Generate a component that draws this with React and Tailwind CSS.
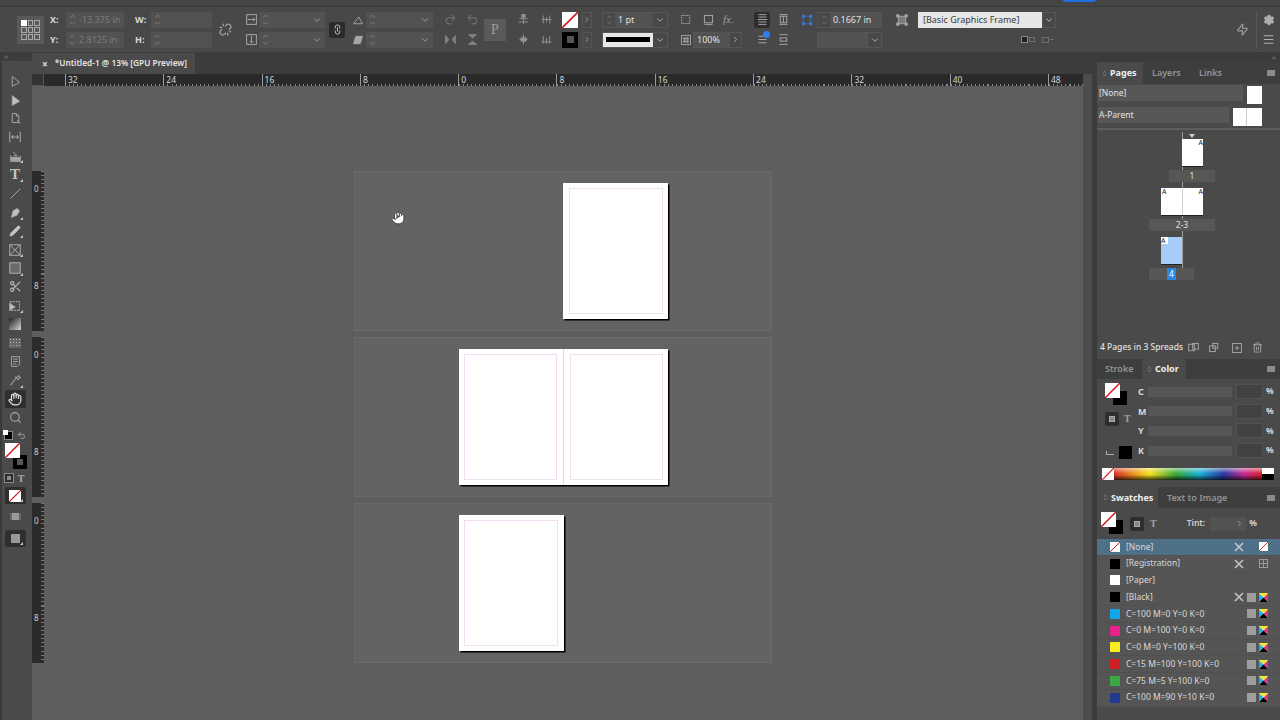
import { Hand, Scissors, Search, Pencil, Settings, Trash2, Menu, Zap, Undo2, Redo2, Unlink, Link2, ChevronRight, ChevronDown, ChevronUp, ChevronsUpDown } from "lucide-react";

const gray = "#a6a6a6";

function Svg({ size = 14, children, className = "" }) {
  return (
    <svg width={size} height={size} viewBox="0 0 16 16" fill="none" stroke={gray} strokeWidth="1.2" className={className}>
      {children}
    </svg>
  );
}

function Stepper() {
  return (
    <div className="w-[12px] h-full flex flex-col items-center justify-center text-[#8f8f8f] shrink-0">
      <ChevronUp size={9} className="-mb-[1px]" />
      <ChevronDown size={9} />
    </div>
  );
}

function NoneSwatch({ className = "" }) {
  return (
    <svg viewBox="0 0 16 16" preserveAspectRatio="none" className={className}>
      <rect width="16" height="16" fill="#fff" />
      <line x1="0" y1="16" x2="16" y2="0" stroke="#d0161c" strokeWidth="1.6" />
    </svg>
  );
}

function SpinField({ label, value, dim, chevron, icon }) {
  return (
    <div className="flex items-center h-[16px]">
      {label && <span className="w-[16px] text-[9px] font-bold text-[#d8d8d8]">{label}</span>}
      {icon && <div className="w-[16px] flex justify-center">{icon}</div>}
      <div className="flex-1 h-full flex items-center bg-[#525252] rounded-[1px]">
        <Stepper />
        <span className={`flex-1 pl-[1px] text-[9px] ${dim ? "text-[#7a7a7a]" : "text-[#e0e0e0]"}`}>{value}</span>
        {chevron && <ChevronDown size={10} className="text-[#a8a8a8] mr-[3px]" />}
      </div>
    </div>
  );
}

function TwoRows({ className, children }) {
  return <div className={`flex flex-col justify-center gap-[4px] shrink-0 ${className}`}>{children}</div>;
}

function IconCell({ children, dark }) {
  return (
    <div className={`w-[16px] h-[16px] flex items-center justify-center ${dark ? "bg-[#2e2e2e] rounded-[2px]" : ""}`}>
      {children}
    </div>
  );
}

function CmykIcon() {
  return (
    <svg width="9" height="9" viewBox="0 0 9 9">
      <rect width="9" height="9" fill="#f5f5f5" />
      <path d="M0 0L4.5 4.5L0 9Z" fill="#19b5ee" />
      <path d="M9 0L4.5 4.5L9 9Z" fill="#ec2f8c" />
      <path d="M0 0H9L4.5 4.5Z" fill="#f6e829" />
      <path d="M0 9H9L4.5 4.5Z" fill="#000" />
    </svg>
  );
}

function CrossIcon() {
  return (
    <svg width="10" height="10" viewBox="0 0 10 10" stroke="#c4c4c4" strokeWidth="1.6">
      <path d="M1 1L9 9M9 1L1 9" />
    </svg>
  );
}

function ControlBar() {
  return (
    <div className="h-[46px] bg-[#484848] border-t border-[#3a3a3a] flex items-center pl-[17px] shrink-0">
      <div className="w-[27px] h-[28px] bg-[#595959] grid grid-cols-3 gap-[1px] p-[4px] shrink-0">
        {[0, 1, 2, 3, 4, 5, 6, 7, 8].map((i) => (
          <div key={i} className={`border border-[#a8a8a8] ${i === 0 ? "bg-white border-white" : ""}`} />
        ))}
      </div>
      <TwoRows className="ml-[6px] w-[74px]">
        <SpinField label="X:" value="-13.375 in" dim />
        <SpinField label="Y:" value="2.8125 in" dim />
      </TwoRows>
      <TwoRows className="ml-[11px] w-[77px]">
        <SpinField label="W:" value="" />
        <SpinField label="H:" value="" />
      </TwoRows>
      <div className="ml-[6px] w-[14px] flex justify-center shrink-0">
        <Unlink size={13} color="#b0b0b0" />
      </div>
      <TwoRows className="ml-[11px] w-[82px]">
        <SpinField chevron value="" icon={<Svg size={13}><rect x="2" y="2" width="12" height="12" /><path d="M3 8H12M10 6L12 8L10 10" /></Svg>} />
        <SpinField chevron value="" icon={<Svg size={13}><rect x="2" y="2" width="12" height="12" /><path d="M8 3V12M6 10L8 12L10 10" /></Svg>} />
      </TwoRows>
      <div className="ml-[4px] w-[16px] h-[16px] bg-[#2b2b2b] rounded-[2px] flex items-center justify-center shrink-0">
        <Link2 size={11} color="#c8c8c8" className="rotate-90" />
      </div>
      <TwoRows className="ml-[5px] w-[83px]">
        <SpinField chevron value="" icon={<Svg size={12}><path d="M2 13H14L9 4Z" /></Svg>} />
        <SpinField chevron value="" icon={<Svg size={12}><path d="M2 13H11L14 3H5Z" fill={gray} /></Svg>} />
      </TwoRows>
      <div className="ml-[9px] w-[38px] grid grid-cols-2 gap-x-[6px] gap-y-[4px] shrink-0 opacity-60">
        <IconCell><Redo2 size={13} color="#8a8a8a" /></IconCell>
        <IconCell><Undo2 size={13} color="#8a8a8a" /></IconCell>
        <IconCell><Svg size={13}><path d="M2 3V13L6 8ZM14 3V13L10 8Z" fill={gray} /></Svg></IconCell>
        <IconCell><Svg size={13}><path d="M3 2H13L8 6ZM3 14H13L8 10Z" fill={gray} /></Svg></IconCell>
      </div>
      <div className="ml-[4px] w-[22px] h-[22px] bg-[#5a5a5a] flex items-center justify-center text-[14px] font-['Liberation_Serif',serif] text-[#9a9a9a] shrink-0">
        P
      </div>
      <div className="ml-[9px] w-[40px] grid grid-cols-2 gap-x-[6px] gap-y-[4px] shrink-0 opacity-80">
        <IconCell><Svg size={13}><path d="M8 2V14M3 7H13M2 11H14" /><rect x="6" y="2" width="4" height="3" fill={gray} /></Svg></IconCell>
        <IconCell><Svg size={13}><path d="M2 8H14M4 3V13M8 5V11M12 3V13" /></Svg></IconCell>
        <IconCell><Svg size={13}><path d="M8 2V14M3 8H13" /><rect x="5" y="6" width="6" height="4" fill={gray} /></Svg></IconCell>
        <IconCell><Svg size={13}><path d="M2 11H14M4 4V13M8 6V13M12 4V13" /></Svg></IconCell>
      </div>
      <div className="ml-[7px] w-[30px] flex flex-col gap-[4px] shrink-0">
        <div className="flex items-center gap-[4px] h-[16px]">
          <NoneSwatch className="w-[16px] h-[16px]" />
          <div className="w-[10px] h-[16px] border border-[#555] flex items-center justify-center"><ChevronRight size={9} color="#c0c0c0" /></div>
        </div>
        <div className="flex items-center gap-[4px] h-[16px]">
          <div className="w-[16px] h-[16px] bg-black flex items-center justify-center"><div className="w-[7px] h-[7px] bg-[#555]" /></div>
          <div className="w-[10px] h-[16px] border border-[#555] flex items-center justify-center"><ChevronRight size={9} color="#c0c0c0" /></div>
        </div>
      </div>
      <div className="ml-[10px] w-[66px] flex flex-col gap-[4px] shrink-0">
        <div className="h-[16px] flex items-center border border-[#565656]">
          <Stepper />
          <span className="flex-1 h-full bg-[#525252] pl-[3px] text-[9px] leading-[14px] text-[#e0e0e0]">1 pt</span>
          <ChevronDown size={10} color="#c0c0c0" className="mx-[2px]" />
        </div>
        <div className="h-[16px] flex items-center border border-[#565656]">
          <div className="flex-1 h-full bg-[#e8e8e8] flex items-center px-[3px]"><div className="w-full h-[5px] bg-black" /></div>
          <ChevronDown size={10} color="#c0c0c0" className="mx-[2px]" />
        </div>
      </div>
      <div className="ml-[10px] w-[64px] flex flex-col gap-[4px] shrink-0">
        <div className="h-[16px] flex items-center gap-[6px]">
          <IconCell><Svg size={13}><rect x="2" y="3" width="10" height="10" strokeDasharray="2 1" /></Svg></IconCell>
          <IconCell><Svg size={13}><rect x="3" y="3" width="10" height="9" /><path d="M3 14H13" /></Svg></IconCell>
          <span className="ml-[1px] italic font-['Liberation_Serif',serif] text-[11px] text-[#a0a0a0]">fx.</span>
        </div>
        <div className="h-[16px] flex items-center">
          <IconCell><Svg size={12}><rect x="2" y="2" width="12" height="12" /><path d="M5 5H7V7H5ZM9 9H11V11H9ZM9 5H11V7H9ZM5 9H7V11H5Z" fill={gray} /></Svg></IconCell>
          <div className="ml-[-1px] flex-1 h-full flex items-center border border-[#565656]">
            <span className="flex-1 h-full bg-[#525252] pl-[3px] text-[9px] leading-[14px] text-[#e0e0e0]">100%</span>
            <ChevronRight size={9} color="#c0c0c0" className="mx-[1px]" />
          </div>
        </div>
      </div>
      <div className="ml-[12px] w-[37px] grid grid-cols-2 gap-x-[5px] gap-y-[4px] shrink-0">
        <IconCell dark><Svg size={13}><path d="M3 2H13M3 5H13M2 8H14M3 11H13M3 14H13" /></Svg></IconCell>
        <IconCell><Svg size={13}><path d="M3 2H13M3 14H13" /><rect x="4" y="4" width="8" height="8" /><path d="M8 4V12" /></Svg></IconCell>
        <div className="relative w-[16px] h-[16px] flex items-center justify-center">
          <Svg size={13}><path d="M3 4H13M3 8H13M3 12H13" /></Svg>
          <div className="absolute -top-[1px] right-0 w-[7px] h-[7px] rounded-full bg-[#2f7bea]" />
        </div>
        <IconCell><Svg size={13}><path d="M3 2H13M3 14H13" /><rect x="4" y="6" width="8" height="4" /></Svg></IconCell>
      </div>
      <div className="ml-[8px] w-[83px] flex flex-col gap-[4px] shrink-0">
        <div className="h-[16px] flex items-center">
          <div className="w-[16px] flex justify-center shrink-0">
            <svg width="12" height="12" viewBox="0 0 16 14" fill="#3a78cf" stroke="#3a78cf">
              <path d="M3 2H13M3 12H13M3 2V12M13 2V12" fill="none" strokeWidth="1" />
              <rect x="1.5" y="0.5" width="3" height="3" />
              <rect x="11.5" y="0.5" width="3" height="3" />
              <rect x="1.5" y="10.5" width="3" height="3" />
              <rect x="11.5" y="10.5" width="3" height="3" />
            </svg>
          </div>
          <div className="ml-[2px] w-[65px] h-full flex items-center border border-[#565656]">
            <Stepper />
            <span className="flex-1 h-full bg-[#525252] pl-[3px] text-[9px] leading-[14px] text-[#e0e0e0]">0.1667 in</span>
          </div>
        </div>
        <div className="h-[16px] flex items-center pl-[18px]">
          <div className="w-[50px] h-full bg-[#525252] border border-[#565656]" />
          <div className="w-[15px] h-full border border-[#565656] flex items-center justify-center"><ChevronDown size={10} color="#c0c0c0" /></div>
        </div>
      </div>
      <div className="ml-[13px] w-[161px] flex flex-col gap-[4px] shrink-0">
        <div className="h-[16px] flex items-center">
          <div className="w-[14px] flex justify-center shrink-0">
            <Svg size={12}><rect x="3" y="3" width="10" height="10" fill="#7c7c7c" /><rect x="1" y="1" width="3" height="3" fill={gray} /><rect x="12" y="1" width="3" height="3" fill={gray} /><rect x="1" y="12" width="3" height="3" fill={gray} /><rect x="12" y="12" width="3" height="3" fill={gray} /></Svg>
          </div>
          <div className="ml-[9px] w-[124px] h-full bg-[#e6e6e6] pl-[5px] text-[9px] leading-[16px] text-[#3c3c3c]">[Basic Graphics Frame]</div>
          <div className="w-[14px] h-full border border-[#565656] flex items-center justify-center"><ChevronDown size={10} color="#d0d0d0" /></div>
        </div>
        <div className="h-[16px] flex items-center justify-end gap-[7px] pr-[2px]">
          <div className="flex items-center gap-[1px]">
            <div className="w-[7px] h-[7px] bg-[#222] border border-[#8a8a8a]" />
            <div className="w-[6px] h-[5px] border border-[#6e6e6e]" />
          </div>
          <div className="flex items-center gap-[1px]">
            <div className="w-[7px] h-[6px] border border-[#6e6e6e]" />
            <div className="w-[4px] h-[1px] bg-[#6e6e6e]" />
          </div>
        </div>
      </div>
      <div className="flex-1" />
      <Zap size={13} color="#9c9c9c" className="-rotate-6 mr-[3px]" />
      <div className="ml-[4px] w-px h-[38px] bg-[#585858]" />
      <div className="w-[23px] flex flex-col items-center gap-[7px]">
        <Settings size={12} color="#b0b0b0" fill="#b0b0b0" />
        <Menu size={13} color="#b0b0b0" />
      </div>
    </div>
  );
}

function ToolCorner() {
  return <div className="absolute right-[3px] bottom-[2px] w-0 h-0 border-l-[3px] border-l-transparent border-b-[3px] border-b-[#c8c8c8]" />;
}

function Tool({ children, corner, active, h = "h-[18.7px]" }) {
  return (
    <div className={`relative w-[21px] ${h} flex items-center justify-center shrink-0 ${active ? "bg-[#2f2f2f] rounded-[2px]" : ""}`}>
      {children}
      {corner && <ToolCorner />}
    </div>
  );
}

function Toolbar() {
  return (
    <div className="w-[32px] bg-[#4a4a4a] border-l-2 border-[#3b3b3b] flex flex-col shrink-0">
      <div className="h-[9px] bg-[#3c3c3c] text-[7px] leading-[9px] pl-[2px] text-[#8a8a8a] shrink-0">››</div>
      <div className="w-[26px] flex flex-col items-center pt-[11px]">
        <Tool><Svg size={13}><path d="M4 2V14L13 9Z" /></Svg></Tool>
        <Tool><Svg size={13}><path d="M4 2V14L13 9Z" fill="#c0c0c0" /></Svg></Tool>
        <Tool><Svg size={13}><path d="M4 2H9L12 5V13H4ZM9 2V5H12" /><path d="M10 10L14 14" /></Svg></Tool>
        <Tool><Svg size={14}><path d="M2 2V14M14 2V14M4 8H12M4 8L6 6M4 8L6 10M12 8L10 6M12 8L10 10" /></Svg></Tool>
        <Tool corner><Svg size={13}><path d="M2 7V14H14V7M6 7H10" /><path d="M3 9H13V13H3Z" fill={gray} /><path d="M5 2L9 6" /></Svg></Tool>
        <Tool corner><span className="font-['Liberation_Serif',serif] font-bold text-[15px] leading-none text-[#c4c4c4]">T</span></Tool>
        <Tool><Svg size={13}><path d="M2 14L14 2" /></Svg></Tool>
        <Tool corner><Svg size={13}><path d="M3 14L5 6L10 3L13 6L10 11Z" fill="#c0c0c0" /></Svg></Tool>
        <Tool corner><Pencil size={12} color="#c0c0c0" fill="#c0c0c0" /></Tool>
        <Tool corner><Svg size={14}><rect x="2" y="2" width="12" height="12" /><path d="M2 2L14 14M14 2L2 14" /></Svg></Tool>
        <Tool corner><Svg size={14}><rect x="2" y="2" width="12" height="12" fill="#6a6a6a" /></Svg></Tool>
        <Tool><Scissors size={13} color="#c0c0c0" /></Tool>
        <Tool corner><Svg size={14}><rect x="3" y="3" width="10" height="10" strokeDasharray="2 1" /><path d="M2 5V13L8 9Z" fill="#c0c0c0" /></Svg></Tool>
        <Tool><div className="w-[12px] h-[12px] bg-gradient-to-br from-[#222] to-[#ddd]" /></Tool>
        <Tool><div className="w-[12px] h-[10px] bg-[radial-gradient(#bbb_1px,#666_1px)] bg-[length:3px_3px]" /></Tool>
        <Tool><Svg size={13}><path d="M3 2H13V11L10 14H3ZM5 5H11M5 8H11M5 11H9" /></Svg></Tool>
        <Tool corner><Svg size={14}><path d="M3 14L9 6M8 4L12 8M10 5L12 3L14 5L12 7" /></Svg></Tool>
        <Tool active><Hand size={14} color="#e0e0e0" strokeWidth={2} /></Tool>
        <Tool><Search size={13} color="#a8a8a8" /></Tool>
        <div className="w-[26px] h-[15px] flex items-center justify-between px-[2px] shrink-0 mt-[1px]">
          <div className="relative w-[9px] h-[9px] bg-black border border-[#888]"><div className="absolute -top-[2px] -left-[2px] w-[5px] h-[5px] bg-white" /></div>
          <Undo2 size={9} color="#b0b0b0" />
        </div>
        <div className="relative w-[26px] h-[26px] shrink-0">
          <div className="absolute right-[1px] bottom-[0px] w-[14px] h-[14px] bg-black flex items-center justify-center"><div className="w-[6px] h-[6px] bg-[#555]" /></div>
          <NoneSwatch className="absolute left-[3px] top-0 w-[15px] h-[15px]" />
        </div>
        <div className="flex items-center justify-center gap-[2px] h-[16px] shrink-0 mt-[1px]">
          <div className="w-[10px] h-[10px] bg-[#2e2e2e] flex items-center justify-center border border-[#888]"><div className="w-[4px] h-[4px] bg-[#888]" /></div>
          <span className="w-[10px] text-center font-['Liberation_Serif',serif] font-bold text-[10px] text-[#a8a8a8]">T</span>
        </div>
        <Tool active h="h-[17px] mt-[1px]"><NoneSwatch className="w-[12px] h-[12px]" /><ToolCorner /></Tool>
        <div className="h-[20px] flex items-center shrink-0 mt-[2px]">
          <div className="w-[11px] h-[7px] bg-[#9a9a9a] border-x-2 border-[#666]" />
        </div>
        <Tool active h="h-[17px] mt-[4px]"><div className="w-[9px] h-[9px] bg-[#999]" /><ToolCorner /></Tool>
      </div>
    </div>
  );
}

const rulerLabels = ["32", "24", "16", "8", "0", "8", "16", "24", "32", "40", "48"];

function HRuler() {
  return (
    <div className="h-[12px] flex bg-[#4c4c4c] shrink-0">
      <div className="w-[12px] h-full bg-[#333] border-r border-b border-[#555] shrink-0" />
      <div className="w-[1039px] h-full flex overflow-hidden pl-[21px] bg-[#2a2a2a]">
        <div className="flex h-full bg-[repeating-linear-gradient(to_right,#8a8a8a_0,#8a8a8a_1px,transparent_1px,transparent_4.1px)] bg-[length:100%_2px] bg-bottom bg-no-repeat">
          {rulerLabels.map((t, i) => (
            <div key={i} className="w-[98.3px] shrink-0 border-l border-[#9a9a9a] pl-[2px] text-[8.5px] leading-[11px] text-[#d4d4d4]">
              {t}
            </div>
          ))}
        </div>
      </div>
    </div>
  );
}

function VSegment({ h, label, label2 }) {
  return (
    <div className={`w-[12px] ${h} bg-[#2b2b2b] bg-[repeating-linear-gradient(to_bottom,#777_0,#777_1px,transparent_1px,transparent_4.1px)] bg-[length:3px_100%] bg-right bg-no-repeat text-[8px] text-[#d0d0d0] pl-[2px] pt-[12px] leading-[10px]`}>
      <div className="h-[98px] border-t border-transparent">{label}</div>
      <div>{label2}</div>
    </div>
  );
}

function VRuler() {
  return (
    <div className="w-[12px] bg-[#5e5e5e] flex flex-col items-stretch shrink-0 pt-[85px] gap-[6px]">
      <VSegment h="h-[160px]" label="0" label2="8" />
      <VSegment h="h-[160px]" label="0" label2="8" />
      <VSegment h="h-[160px]" label="0" label2="8" />
    </div>
  );
}

function DocPage({ inner = "left", w = "w-[105px]" }) {
  return (
    <div className={`${w} h-[136px] bg-white py-[5px] ${inner === "left" ? "pl-[6px] pr-[5px]" : "pl-[5px] pr-[6px]"}`}>
      <div className="w-full h-full border border-[#f2dcf2] border-b-[#ebe3eb]" />
    </div>
  );
}

function Spread({ children, offset }) {
  return (
    <div className={`w-[418px] h-[160px] bg-[#636363] border border-[#6a6a6a] pt-[11px] ${offset}`}>
      <div className="w-fit flex shadow-[1.5px_1.5px_0_#000]">{children}</div>
    </div>
  );
}

function Canvas() {
  return (
    <div className="relative flex-1 bg-[#5e5e5e] pt-[85px] pl-[310px] flex flex-col gap-[6px] overflow-hidden">
      <Spread offset="pl-[208px]"><DocPage inner="left" /></Spread>
      <Spread offset="pl-[104px]">
        <DocPage inner="right" w="w-[104px]" />
        <div className="w-px bg-[#dcdcdc]" />
        <DocPage inner="left" w="w-[104px]" />
      </Spread>
      <Spread offset="pl-[104px]"><DocPage inner="right" /></Spread>
      <Hand size={14} color="#222" fill="#fff" strokeWidth={1.2} className="absolute left-[347px] top-[125px]" />
    </div>
  );
}

function PanelTabs({ tabs, active, h = "h-[20px]" }) {
  return (
    <div className={`${h} bg-[#3e3e3e] flex items-stretch shrink-0`}>
      {tabs.map((t) => (
        <div
          key={t.name}
          className={`flex items-center text-[9px] ${t.w} ${t.name === active ? "bg-[#4a4a4a] font-bold text-[#f0f0f0]" : "font-semibold text-[#949494]"}`}
        >
          {t.name === active && <ChevronsUpDown size={7} className="text-[#a0a0a0] mr-[2px]" />}
          {t.name}
        </div>
      ))}
      <div className="flex-1" />
      <div className="w-[8px] h-[6px] bg-[#8a8a8a] self-center mr-[5px]" />
    </div>
  );
}

function Thumb({ className = "", children }) {
  return <div className={`relative shadow-[0_1px_0_#222] ${className}`}>{children}</div>;
}

function Letter({ className = "" }) {
  return <span className={`absolute top-0 text-[7px] leading-[8px] text-[#222] ${className}`}>A</span>;
}

function PagesPanel() {
  return (
    <div className="flex flex-col h-[297px] bg-[#4a4a4a] shrink-0">
      <PanelTabs
        h="h-[22px]"
        active="Pages"
        tabs={[
          { name: "Pages", w: "w-[46px] pl-[4px]" },
          { name: "Layers", w: "w-[47px] pl-[9px]" },
          { name: "Links", w: "w-[45px] pl-[9px]" },
        ]}
      />
      <div className="h-[46px] border-b-2 border-[#5e5e5e] pt-[1px] shrink-0 box-border">
        <div className="flex items-start gap-[4px] h-[22px] pr-[18px] pl-[1px]">
          <div className="flex-1 h-[16px] bg-[#575757] text-[8.5px] leading-[15px] pl-[1px] text-[#e4e4e4]">[None]</div>
          <div className="w-[15px] h-[18px] mt-[1px] bg-white" />
        </div>
        <div className="flex items-start gap-[4px] h-[20px] pr-[18px] pl-[1px]">
          <div className="flex-1 h-[16px] bg-[#575757] text-[8.5px] leading-[15px] pl-[1px] text-[#e4e4e4]">A-Parent</div>
          <div className="w-[29px] h-[18px] mt-[1px] bg-white flex"><div className="w-[14px] border-r border-[#ccc]" /></div>
        </div>
      </div>
      <div className="relative flex-1 pt-[9px] text-[8.5px] text-[#e0e0e0]">
        <div className="absolute left-[85px] top-[2px] w-px h-[136px] bg-[#9c9c9c]" />
        <div className="absolute left-[92px] top-[4px] w-0 h-0 border-x-[3px] border-x-transparent border-t-[4px] border-t-[#cfcfcf]" />
        <div className="ml-[85px] w-[21px]"><Thumb className="h-[27px] bg-white"><Letter className="right-[0px]" /></Thumb></div>
        <div className="relative ml-[72px] w-[46px] h-[12px] bg-[#575757] text-center leading-[12px] mt-[4px]">1</div>
        <div className="relative ml-[64px] w-[42px] mt-[6px]"><Thumb className="h-[27px] bg-white"><Letter className="left-[1px]" /><Letter className="right-[0px]" /><div className="absolute left-[21px] top-0 h-full w-px bg-[#cfcfcf]" /></Thumb></div>
        <div className="relative ml-[52px] w-[66px] h-[12px] bg-[#575757] text-center leading-[12px] mt-[4px]">2-3</div>
        <div className="ml-[64px] w-[21px] mt-[6px]"><Thumb className="h-[27px] bg-[#a6cdf7]"><span className="absolute left-0 top-0 w-[7px] h-[7px] bg-white text-[7px] leading-[7px] text-[#222]">A</span></Thumb></div>
        <div className="relative ml-[52px] w-[45px] h-[12px] bg-[#575757] mt-[4px] flex justify-center">
          <span className="w-[9px] h-full bg-[#2a86e0] text-center leading-[12px] text-white">4</span>
        </div>
      </div>
      <div className="h-[17px] mb-[3px] flex items-center pl-[3px] bg-[#4a4a4a] shrink-0">
        <span className="w-[87px] text-[8.5px] text-[#e0e0e0] font-medium whitespace-nowrap">4 Pages in 3 Spreads</span>
        <Svg size={13}><rect x="2" y="4" width="7" height="8" /><rect x="7" y="3" width="7" height="7" /></Svg>
        <Svg size={13} className="ml-[8px]"><rect x="2" y="6" width="7" height="7" /><rect x="6" y="3" width="6" height="6" /></Svg>
        <Svg size={12} className="ml-[10px]"><rect x="2" y="2" width="12" height="12" /><path d="M8 5V11M5 8H11" /></Svg>
        <Trash2 size={11} color={gray} className="ml-[9px]" />
      </div>
    </div>
  );
}

function CmykRow({ letter }) {
  return (
    <div className="flex items-center h-[19.6px]">
      <span className="w-[10px] text-[9px] font-bold text-[#d8d8d8]">{letter}</span>
      <div className="w-[84px] h-[10px] bg-[#565656] rounded-[1px]" />
      <div className="ml-[4px] w-[27px] h-[15px] bg-[#424242] border border-[#525252]" />
      <span className="ml-[3px] text-[8.5px] font-bold text-[#d8d8d8]">%</span>
    </div>
  );
}

function ColorPanel() {
  return (
    <div className="h-[128px] flex flex-col bg-[#4a4a4a] shrink-0">
      <PanelTabs
        active="Color"
        tabs={[
          { name: "Stroke", w: "w-[45px] pl-[8px]" },
          { name: "Color", w: "w-[44px] pl-[4px]" },
        ]}
      />
      <div className="h-[84px] flex pl-[8px] pt-[3px] shrink-0">
        <div className="w-[33px] flex flex-col items-start shrink-0">
          <div className="relative w-[24px] h-[24px] mt-[1px] shrink-0">
            <div className="absolute left-[8px] top-[8px] w-[14px] h-[14px] bg-black" />
            <NoneSwatch className="absolute left-0 top-0 w-[15px] h-[15px]" />
          </div>
          <div className="mt-[4px] flex items-center gap-[5px]">
            <div className="w-[14px] h-[14px] bg-[#2e2e2e] rounded-[2px] flex items-center justify-center"><div className="w-[6px] h-[6px] bg-[#888] border border-[#aaa]" /></div>
            <span className="font-['Liberation_Serif',serif] font-bold text-[10px] text-[#a0a0a0]">T</span>
          </div>
          <div className="mt-[20px] flex items-center gap-[5px] pl-[1px]">
            <div className="w-[8px] h-[4px] border-l border-b border-[#aaa]" />
            <div className="w-[13px] h-[13px] bg-black" />
          </div>
        </div>
        <div>
          <CmykRow letter="C" />
          <CmykRow letter="M" />
          <CmykRow letter="Y" />
          <CmykRow letter="K" />
        </div>
      </div>
      <div className="h-[12px] mt-[5px] ml-[5px] mr-[6px] flex shrink-0">
        <NoneSwatch className="w-[12px] h-[12px]" />
        <div className="flex-1 bg-[linear-gradient(to_bottom,rgba(255,255,255,0.55),transparent_45%,transparent_55%,rgba(0,0,0,0.75)),linear-gradient(to_right,#d8332a,#e88a20_12%,#f5e020_24%,#3cab3c_42%,#18b0d8_58%,#2838a0_74%,#c82a90_88%,#d8232a)]" />
        <div className="w-[12px] flex flex-col"><div className="h-[6px] bg-white" /><div className="h-[6px] bg-black" /></div>
      </div>
    </div>
  );
}

const swatches = [
  { name: "[None]", none: true, cross: true, selected: true },
  { name: "[Registration]", color: "#000", cross: true, reg: true },
  { name: "[Paper]", color: "#fff" },
  { name: "[Black]", color: "#000", cross: true, cmyk: true },
  { name: "C=100 M=0 Y=0 K=0", color: "#12a5e8", cmyk: true },
  { name: "C=0 M=100 Y=0 K=0", color: "#e8228a", cmyk: true },
  { name: "C=0 M=0 Y=100 K=0", color: "#f8ec1e", cmyk: true },
  { name: "C=15 M=100 Y=100 K=0", color: "#cf2027", cmyk: true },
  { name: "C=75 M=5 Y=100 K=0", color: "#3aa843", cmyk: true },
  { name: "C=100 M=90 Y=10 K=0", color: "#23398f", cmyk: true },
];

function SwatchRow({ s }) {
  return (
    <div className={`h-[16.75px] flex items-center pl-[13px] border-b border-[#505050] ${s.selected ? "bg-[#4f7089]" : ""}`}>
      {s.none ? (
        <NoneSwatch className="w-[10px] h-[10px] shrink-0" />
      ) : (
        <div className="w-[10px] h-[10px] shrink-0" style={{ backgroundColor: s.color }} />
      )}
      <span className="ml-[6px] flex-1 text-[8.5px] text-[#dadada] whitespace-nowrap">{s.name}</span>
      <div className="w-[10px] flex justify-center">{s.cross && <CrossIcon />}</div>
      <div className="ml-[3px] w-[9px] h-[9px]">{s.cmyk && <div className="w-full h-full bg-[#9e9e9e]" />}</div>
      <div className="ml-[3px] mr-[12px] w-[9px] h-[9px]">
        {s.cmyk && <CmykIcon />}
        {s.none && <NoneSwatch className="w-[9px] h-[9px]" />}
        {s.reg && (
          <div className="w-full h-full border border-[#999] grid grid-cols-2 grid-rows-2">
            <div className="border-r border-b border-[#999]" />
            <div className="border-b border-[#999]" />
            <div className="border-r border-[#999]" />
            <div />
          </div>
        )}
      </div>
    </div>
  );
}

function SwatchesPanel() {
  return (
    <div className="flex-1 flex flex-col bg-[#4a4a4a]">
      <PanelTabs
        h="h-[21px]"
        active="Swatches"
        tabs={[
          { name: "Swatches", w: "w-[61px] pl-[5px]" },
          { name: "Text to Image", w: "w-[78px] pl-[9px]" },
        ]}
      />
      <div className="h-[31px] flex items-center pl-[4px] shrink-0">
        <div className="relative w-[24px] h-[24px] shrink-0">
          <div className="absolute left-[8px] top-[8px] w-[14px] h-[14px] bg-black" />
          <NoneSwatch className="absolute left-0 top-0 w-[15px] h-[15px]" />
        </div>
        <div className="ml-[5px] w-[14px] h-[14px] bg-[#2e2e2e] rounded-[2px] flex items-center justify-center"><div className="w-[6px] h-[6px] bg-[#888] border border-[#aaa]" /></div>
        <span className="ml-[6px] font-['Liberation_Serif',serif] font-bold text-[10px] text-[#a0a0a0]">T</span>
        <span className="ml-[30px] text-[8.5px] font-semibold text-[#d0d0d0]">Tint:</span>
        <div className="ml-[5px] w-[36px] h-[14px] bg-[#525252] flex items-center justify-end pr-[2px]"><ChevronRight size={9} color="#aaa" /></div>
        <span className="ml-[3px] text-[8.5px] font-bold text-[#d0d0d0]">%</span>
      </div>
      <div className="shrink-0 bg-[#555555]">
        {swatches.map((s) => (
          <SwatchRow key={s.name} s={s} />
        ))}
      </div>
    </div>
  );
}

function RightPanels() {
  return (
    <div className="w-[188px] bg-[#3b3b3b] flex flex-col shrink-0 pl-[5px] pt-[10px] relative">
      <span className="absolute right-[4px] top-[1px] text-[7px] leading-[9px] text-[#8a8a8a]">››</span>
      <PagesPanel />
      <ColorPanel />
      <SwatchesPanel />
    </div>
  );
}

export default function App() {
  return (
    <div className="w-[1280px] h-[720px] overflow-hidden flex flex-col bg-[#3c3c3c] font-['Noto_Sans',sans-serif]">
      <div className="h-[6px] bg-[#444] shrink-0 flex items-start pl-[1063px]">
        <div className="w-[33px] h-[2px] bg-[#1f6fe0] rounded-b-[2px]" />
      </div>
      <ControlBar />
      <div className="flex-1 flex min-h-0">
        <Toolbar />
        <div className="w-[1060px] flex flex-col shrink-0">
          <div className="h-[22px] shrink-0 flex items-end">
            <div className="w-[163px] h-[21px] bg-[#4a4a4a] flex items-center pl-[10px] text-[8.3px] font-semibold text-[#e4e4e4]">
              <span className="mr-[7px] text-[10px] leading-none">×</span>
              <span className="whitespace-nowrap">*Untitled-1 @ 13% [GPU Preview]</span>
            </div>
          </div>
          <HRuler />
          <div className="flex-1 flex min-h-0">
            <VRuler />
            <Canvas />
            <div className="w-[9px] bg-[#4c4c4c] shrink-0" />
          </div>
        </div>
        <RightPanels />
      </div>
    </div>
  );
}
